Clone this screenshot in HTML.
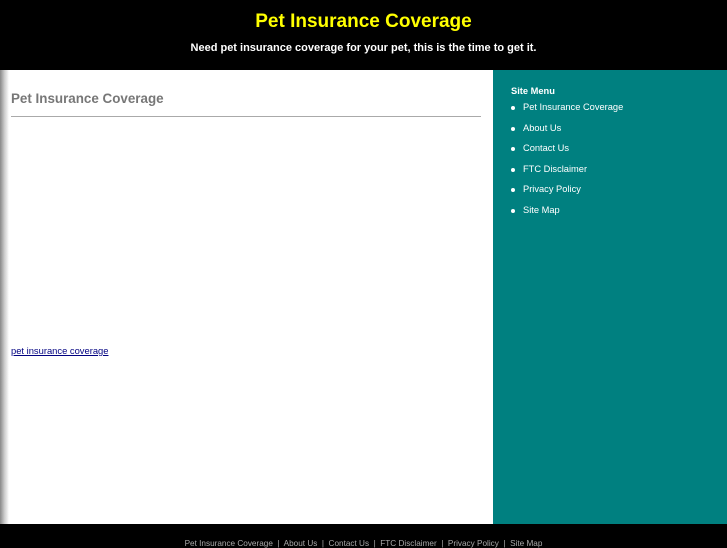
<!DOCTYPE html>
<html><head><style>
body{margin:0;width:727px;height:545px;overflow:hidden;font-family:"Liberation Sans",sans-serif;background:#000;position:relative}
#hd{position:absolute;left:0;top:0;width:727px;height:70px;background:#000;text-align:center}
#hd h1{margin:0;position:absolute;top:11px;width:100%;font-size:19px;color:#ff0;font-weight:bold}
#hd p{margin:0;position:absolute;top:42px;width:100%;font-size:11px;color:#fff;font-weight:bold}
#main{position:absolute;left:0;top:70px;width:493px;height:454px;background:#fff}
#shadow{position:absolute;left:0;top:0;width:9px;height:454px;background:linear-gradient(to right,#888,#ccc 50%,#fff)}
#main h2{position:absolute;left:11px;top:21px;margin:0;font-size:13.4px;color:#777;font-weight:bold}
#hr{position:absolute;left:11px;top:46px;width:470px;height:1px;background:#aaa}
#lnk{position:absolute;left:11px;top:275px;font-size:9.4px;color:#000080;text-decoration:underline}
#sb{position:absolute;left:493px;top:70px;width:234px;height:454px;background:#008080;color:#fff;font-size:9.3px}
#sb b{position:absolute;left:18px;top:16px;font-size:9.3px}
#sb ul{position:absolute;left:18px;top:32px;margin:0;padding:0;list-style:none}
#sb li{height:20.5px;position:relative;padding-left:12px}
#sb li:before{content:"";position:absolute;left:0;top:4px;width:4px;height:4px;border-radius:50%;background:#fff}
#ft{position:absolute;left:0;top:539px;width:727px;text-align:center;color:#aaa;font-size:8.2px}
</style></head><body>
<div id="hd"><h1>Pet Insurance Coverage</h1><p>Need pet insurance coverage for your pet, this is the time to get it.</p></div>
<div id="main"><div id="shadow"></div><h2>Pet Insurance Coverage</h2><div id="hr"></div><span id="lnk">pet insurance coverage</span></div>
<div id="sb"><b>Site Menu</b><ul><li>Pet Insurance Coverage</li><li>About Us</li><li>Contact Us</li><li>FTC Disclaimer</li><li>Privacy Policy</li><li>Site Map</li></ul></div>
<div id="ft">Pet Insurance Coverage &nbsp;|&nbsp; About Us &nbsp;|&nbsp; Contact Us &nbsp;|&nbsp; FTC Disclaimer &nbsp;|&nbsp; Privacy Policy &nbsp;|&nbsp; Site Map</div>
</body></html>
